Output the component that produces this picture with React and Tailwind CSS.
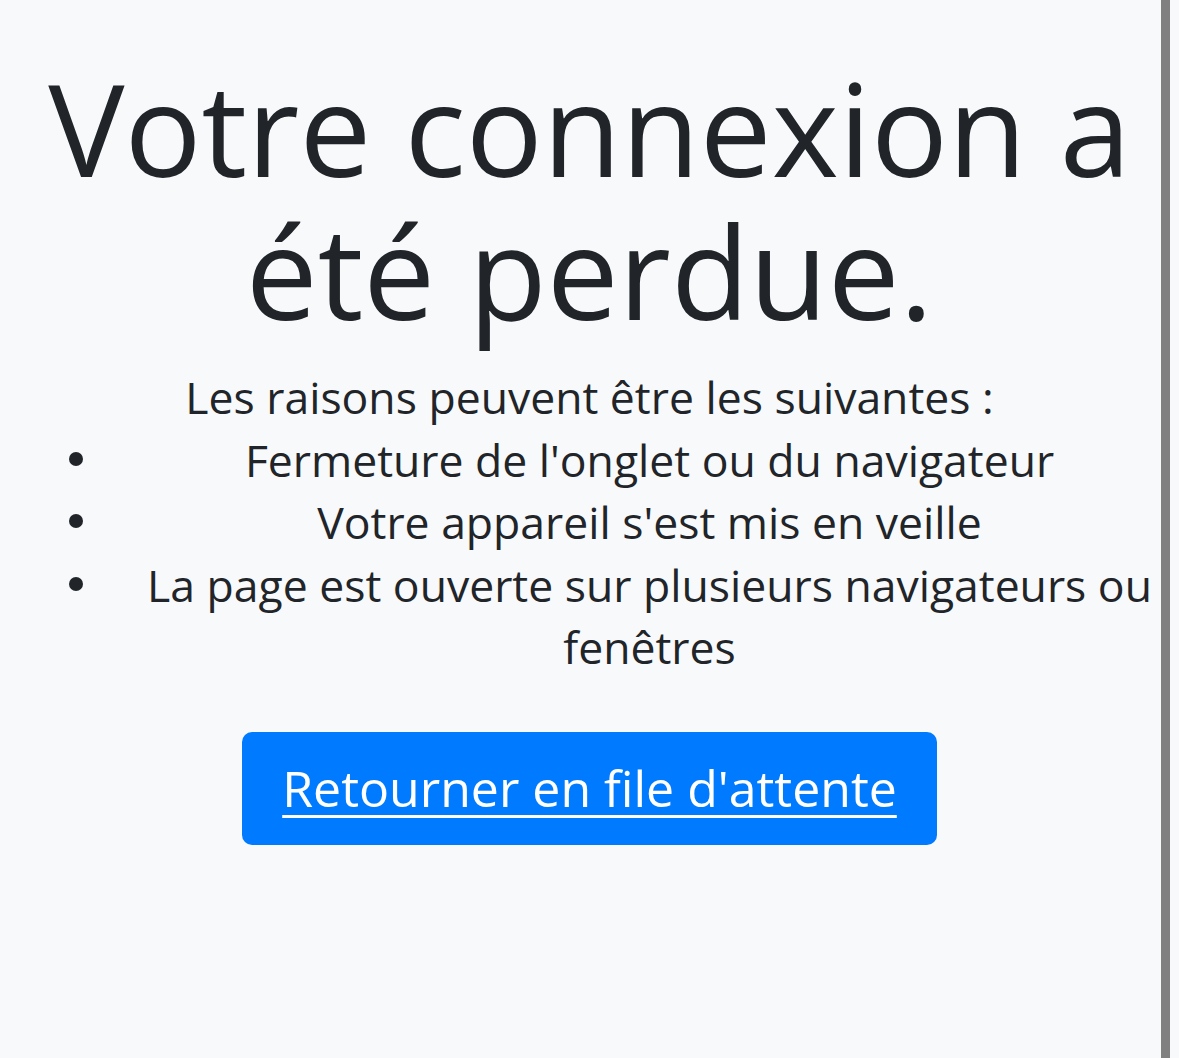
import React from "react";

const reasons = [
  "Fermeture de l'onglet ou du navigateur",
  "Votre appareil s'est mis en veille",
  "La page est ouverte sur plusieurs navigateurs ou fenêtres",
];

const App = () => {
  return (
    <div
      className="relative min-h-[1058px] w-full bg-[#f8f9fa] text-[#212529] text-center"
      style={{ fontFamily: '"Open Sans", "Noto Sans", sans-serif' }}
    >
      {/* scrollbar-like strip on the right */}
      <div className="absolute top-0 bottom-0 left-[1161px] w-[9px] bg-[#808080]" />

      <div className="pt-[56px]">
        <h1 className="text-[128px] leading-[143px] font-normal">
          Votre connexion a été perdue.
        </h1>

        <p className="mt-[24px] text-[44.5px] leading-[62.5px]">
          Les raisons peuvent être les suivantes :
        </p>

        <ul className="list-none pl-[120px] text-[44.5px] leading-[62.5px]">
          {reasons.map((r) => (
            <li
              key={r}
              className="relative before:absolute before:left-[-51px] before:top-[23px] before:size-[14px] before:rounded-full before:bg-[#212529] before:content-['']"
            >
              {r}
            </li>
          ))}
        </ul>

        <div className="mt-[53px] flex justify-center">
          <a
            href="#"
            className="flex h-[113px] w-[695px] items-center justify-center rounded-[10px] bg-[#007bff] text-[50px] text-white underline underline-offset-[8px] decoration-[3px]"
          >
            Retourner en file d'attente
          </a>
        </div>
      </div>
    </div>
  );
};

export default App;
